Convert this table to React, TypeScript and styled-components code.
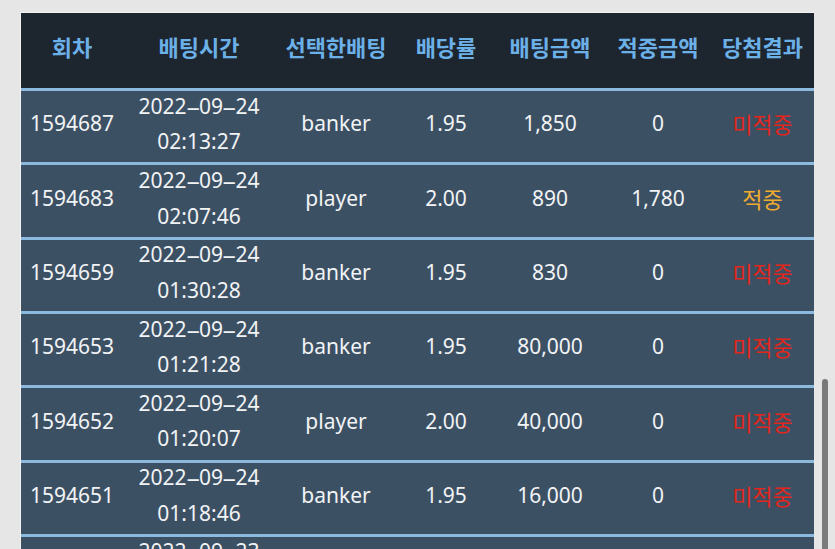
import React from "react";
import styled, { createGlobalStyle } from "styled-components";

const GlobalStyle = createGlobalStyle`
  html, body {
    margin: 0;
    padding: 0;
    background: #e6e6e6;
    overflow: hidden;
    height: 100%;
  }
  body {
    font-family: "Noto Sans", "Noto Sans CJK KR", sans-serif;
  }
`;

const COLS = "102px 152px 122px 98px 110px 106px 103px";

const Page = styled.div`
  padding: 12px 21px 0 20px;
  height: 549px;
  box-sizing: border-box;
  overflow: hidden;
`;

const Table = styled.div`
  border-top: 1px solid #f2f2f2;
  border-left: 1px solid #f2f2f2;
  width: 793px;
`;

const HeaderRow = styled.div`
  display: grid;
  grid-template-columns: ${COLS};
  grid-template-rows: 75px;
  background: #1d252f;
  align-items: center;
`;

const HeadCell = styled.div`
  text-align: center;
  color: #6cb0e8;
  font-family: "Noto Sans CJK KR", "Noto Sans", sans-serif;
  font-weight: 700;
  font-size: 22px;
  line-height: 30px;
  padding-bottom: 10px;
  white-space: nowrap;
`;

const Row = styled.div`
  display: grid;
  grid-template-columns: ${COLS};
  grid-template-rows: 71.33px;
  border-top: 3px solid #8cbadf;
  background: #3c5064;
  align-items: center;
`;

const Cell = styled.div<{ $tone?: "loss" | "win" }>`
  text-align: center;
  white-space: nowrap;
  font-size: ${(p) => (p.$tone ? "22px" : "21px")};
  line-height: 35.66px;
  padding-bottom: 5px;
  color: ${(p) =>
    p.$tone === "loss" ? "#e2261c" : p.$tone === "win" ? "#f0aa2e" : "#f1f3f5"};
  font-family: ${(p) =>
    p.$tone ? '"Noto Sans CJK KR", sans-serif' : '"Noto Sans", "Noto Sans CJK KR", sans-serif'};
`;

const Dash = styled.span`
  display: inline-block;
  width: 12.5px;
  text-align: center;
  transform: scaleX(2.2) translateY(1px);
`;

const ScrollThumb = styled.div`
  position: fixed;
  right: 7px;
  top: 379px;
  width: 6px;
  height: 180px;
  border-radius: 3px;
  background: #7a7a7a;
`;

type Bet = {
  round: string;
  date: string;
  time: string;
  pick: string;
  odds: string;
  amount: string;
  hit: string;
  win: boolean;
};

const bets: Bet[] = [
  { round: "1594687", date: "2022-09-24", time: "02:13:27", pick: "banker", odds: "1.95", amount: "1,850", hit: "0", win: false },
  { round: "1594683", date: "2022-09-24", time: "02:07:46", pick: "player", odds: "2.00", amount: "890", hit: "1,780", win: true },
  { round: "1594659", date: "2022-09-24", time: "01:30:28", pick: "banker", odds: "1.95", amount: "830", hit: "0", win: false },
  { round: "1594653", date: "2022-09-24", time: "01:21:28", pick: "banker", odds: "1.95", amount: "80,000", hit: "0", win: false },
  { round: "1594652", date: "2022-09-24", time: "01:20:07", pick: "player", odds: "2.00", amount: "40,000", hit: "0", win: false },
  { round: "1594651", date: "2022-09-24", time: "01:18:46", pick: "banker", odds: "1.95", amount: "16,000", hit: "0", win: false },
  { round: "1594402", date: "2022-09-23", time: "20:11:05", pick: "player", odds: "2.00", amount: "10,000", hit: "0", win: false },
];

const headers = ["회차", "배팅시간", "선택한배팅", "배당률", "배팅금액", "적중금액", "당첨결과"];

function DateText({ value }: { value: string }) {
  const parts = value.split("-");
  return (
    <>
      {parts.map((p, i) => (
        <React.Fragment key={i}>
          {i > 0 && <Dash>-</Dash>}
          {p}
        </React.Fragment>
      ))}
    </>
  );
}

export default function App() {
  return (
    <>
      <GlobalStyle />
      <Page>
        <Table>
          <HeaderRow>
            {headers.map((h) => (
              <HeadCell key={h}>{h}</HeadCell>
            ))}
          </HeaderRow>
          {bets.map((b) => (
            <Row key={b.round}>
              <Cell>{b.round}</Cell>
              <Cell>
                <DateText value={b.date} />
                <br />
                {b.time}
              </Cell>
              <Cell>{b.pick}</Cell>
              <Cell>{b.odds}</Cell>
              <Cell>{b.amount}</Cell>
              <Cell>{b.hit}</Cell>
              <Cell $tone={b.win ? "win" : "loss"}>{b.win ? "적중" : "미적중"}</Cell>
            </Row>
          ))}
        </Table>
      </Page>
      <ScrollThumb />
    </>
  );
}
